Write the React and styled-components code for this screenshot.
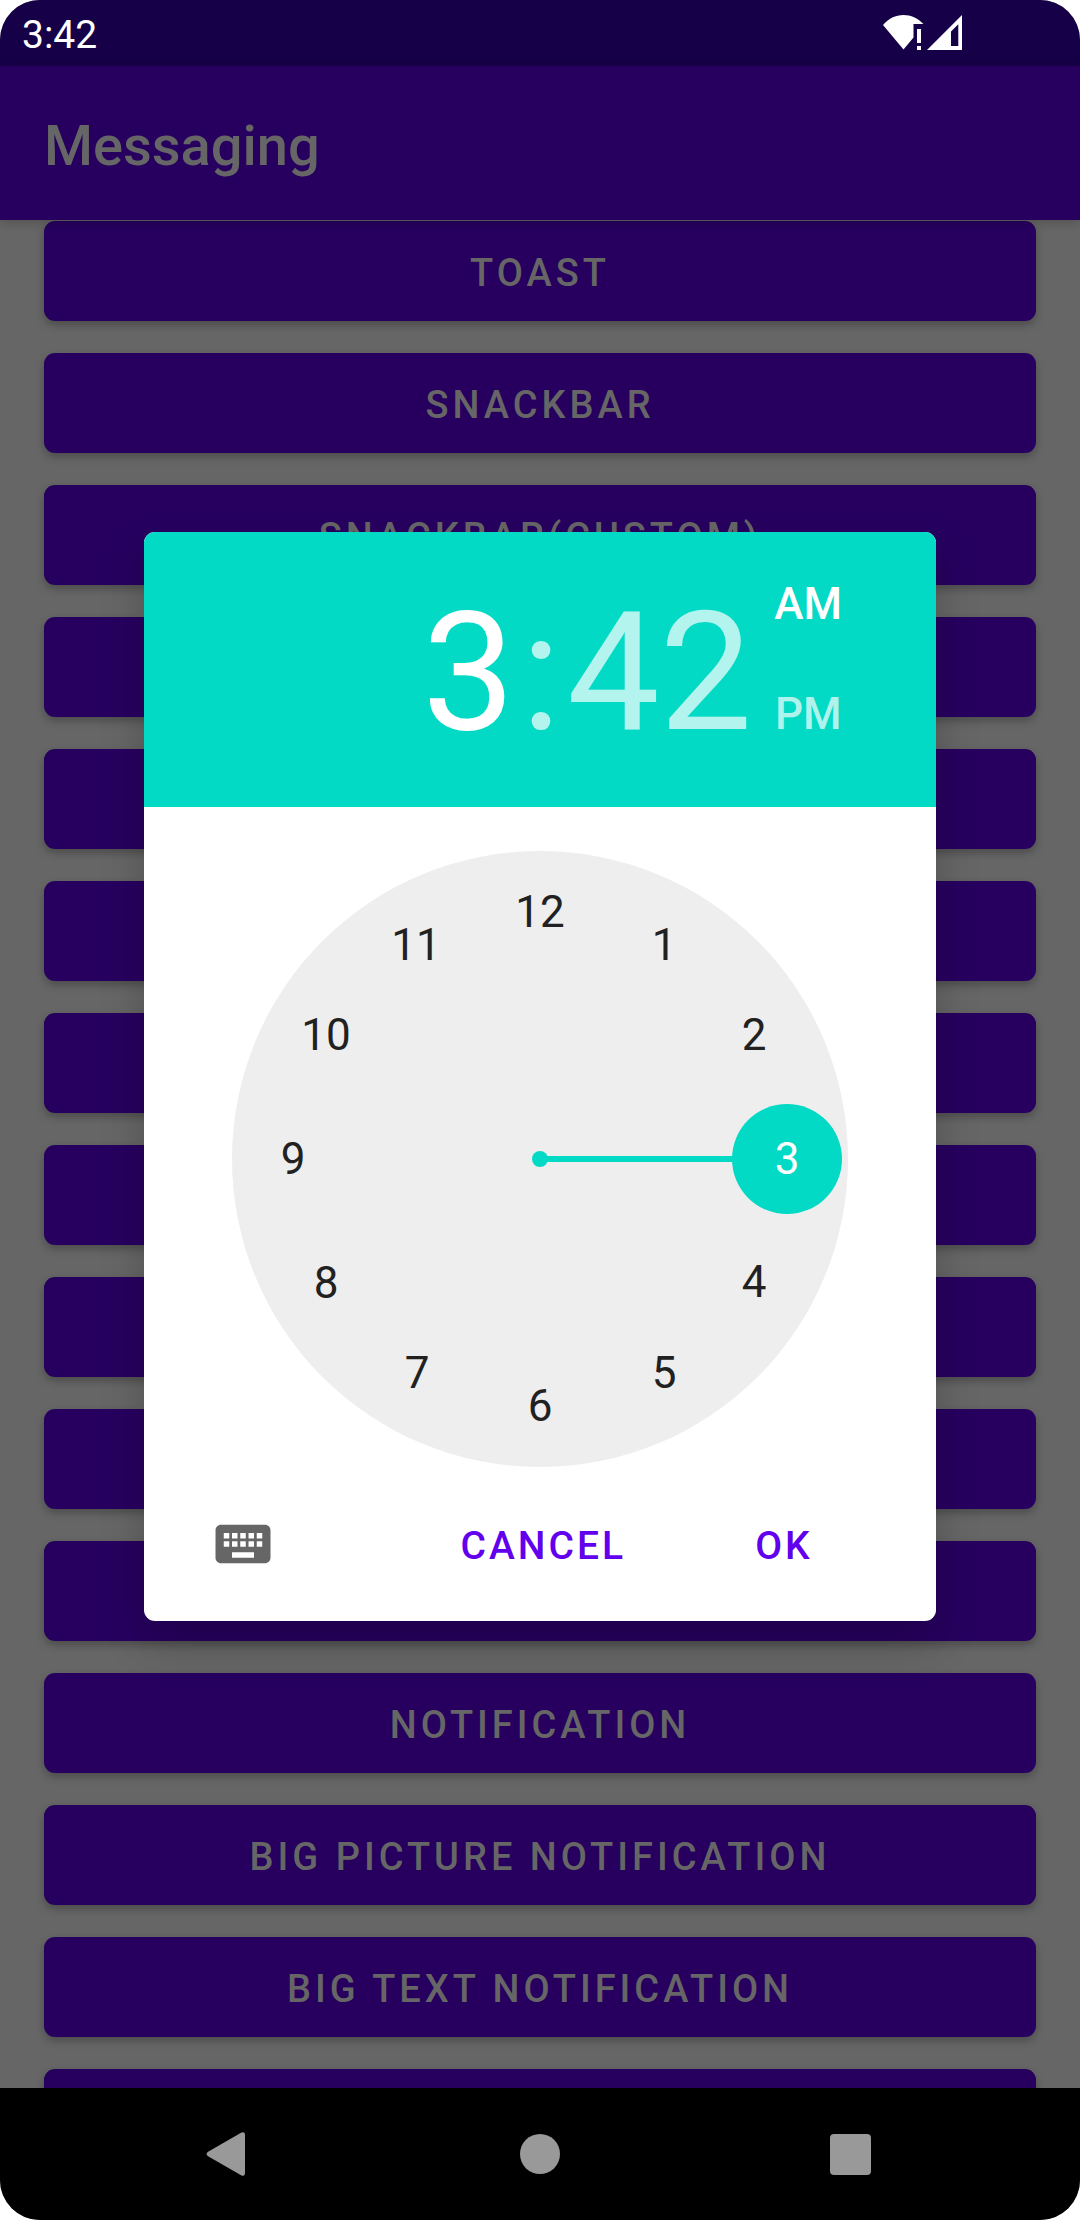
import React, { useState } from "react";
import styled, { createGlobalStyle } from "styled-components";

const color = {
  statusBar: "#160048",
  primaryDimmed: "#27005f",
  surfaceDimmed: "#666666",
  primary: "#6200ee",
  accent: "#03dac5",
  face: "#eeeeee",
  ink: "#212121",
  nav: "#999999",
};

const GlobalStyle = createGlobalStyle`
  *, *::before, *::after { box-sizing: border-box; }
  body { margin: 0; background: #ffffff; }
  button {
    margin: 0;
    padding: 0;
    border: 0;
    background: none;
    font-family: inherit;
    cursor: pointer;
  }
`;

const Screen = styled.div`
  position: relative;
  display: flex;
  flex-direction: column;
  height: 100vh;
  overflow: hidden;
  border-radius: 40px;
  background: ${color.surfaceDimmed};
  font-family: Roboto, "Liberation Sans", sans-serif;
`;

const StatusBar = styled.div`
  display: flex;
  flex: none;
  align-items: center;
  justify-content: space-between;
  height: 66px;
  padding: 0 117px 0 22px;
  background: ${color.statusBar};
  color: #ffffff;
  font-size: 39px;
  line-height: 46px;
`;

const StatusTime = styled.span`
  padding-top: 3px;
`;

const StatusIcons = styled.svg`
  display: block;
  width: 80px;
  height: 36px;
`;

const Toolbar = styled.header`
  position: relative;
  display: flex;
  flex: none;
  align-items: center;
  height: 154px;
  padding: 6px 44px 0;
  background: ${color.primaryDimmed};
  box-shadow: 0 2px 10px rgba(0, 0, 0, 0.22);
`;

const Title = styled.h1`
  margin: 0;
  color: ${color.surfaceDimmed};
  font-size: 56px;
  font-weight: 500;
  line-height: 64px;
`;

const ActionList = styled.main`
  display: flex;
  flex: 1;
  flex-direction: column;
  gap: 32px;
  min-height: 0;
  padding: 1px 44px 0;
  overflow: hidden;
`;

const ActionButton = styled.button`
  flex: none;
  height: 100px;
  padding-top: 4px;
  border-radius: 11px;
  background: ${color.primaryDimmed};
  box-shadow: 0 4px 8px rgba(0, 0, 0, 0.26);
  color: ${color.surfaceDimmed};
  font-size: 38px;
  font-weight: 500;
  line-height: 46px;
  letter-spacing: 4px;
  text-transform: uppercase;
`;

const NavBar = styled.nav`
  display: flex;
  flex: none;
  justify-content: center;
  gap: 90px;
  height: 132px;
  background: #000000;
`;

const NavButton = styled.button`
  display: grid;
  place-items: center;
  width: 220px;
  height: 132px;
`;

const NavIcon = styled.svg`
  display: block;
  width: 66px;
  height: 66px;
  fill: ${color.nav};
`;

const Overlay = styled.div`
  position: absolute;
  inset: 66px 0 133px;
  display: grid;
  place-items: center;
`;

const Dialog = styled.section`
  width: 792px;
  max-width: 100%;
  overflow: hidden;
  border-radius: 11px;
  background: #ffffff;
  box-shadow: 0 22px 44px rgba(0, 0, 0, 0.2);
`;

const TimeHeader = styled.div`
  display: flex;
  align-items: center;
  justify-content: flex-end;
  gap: 22px;
  height: 275px;
  padding-right: 94px;
  background: ${color.accent};
`;

const TimeDisplay = styled.div`
  display: flex;
  align-items: center;
  gap: 6px;
  padding-top: 6px;
  color: rgba(255, 255, 255, 0.7);
  font-size: 165px;
  line-height: 194px;
`;

const TimePart = styled.button`
  color: ${(p) => (p.$active ? "#ffffff" : "rgba(255, 255, 255, 0.7)")};
  font-size: 165px;
  line-height: 194px;
`;

const Meridiem = styled.div`
  display: flex;
  flex-direction: column;
  gap: 58px;
  padding-bottom: 22px;
`;

const MeridiemButton = styled.button`
  color: ${(p) => (p.$active ? "#ffffff" : "rgba(255, 255, 255, 0.7)")};
  font-size: 44px;
  font-weight: 500;
  line-height: 52px;
`;

const DialWrap = styled.div`
  display: grid;
  place-items: center;
  padding-top: 44px;
`;

const Dial = styled.div`
  position: relative;
  width: 616px;
  height: 616px;
`;

const DialFace = styled.svg`
  display: block;
  width: 100%;
  height: 100%;
`;

const Hour = styled.button`
  position: absolute;
  width: 110px;
  height: 110px;
  margin: -55px 0 0 -55px;
  border-radius: 50%;
  color: ${(p) => (p.$active ? "#ffffff" : color.ink)};
  font-size: 44px;
  line-height: 110px;
  text-align: center;
`;

const Footer = styled.div`
  display: flex;
  align-items: center;
  justify-content: flex-end;
  gap: 48px;
  height: 154px;
  padding: 0 64px 0 66px;
`;

const KeyboardButton = styled.button`
  display: block;
  margin-right: auto;
`;

const KeyboardIcon = styled.svg`
  display: block;
  width: 66px;
  height: 66px;
  fill: #666666;
`;

const TextButton = styled.button`
  min-width: 176px;
  height: 100px;
  padding: 4px 22px 0;
  color: ${color.primary};
  font-size: 39px;
  font-weight: 500;
  line-height: 46px;
  letter-spacing: 3px;
`;

const actions = [
  { label: "Toast" },
  { label: "Snackbar" },
  { label: "Snackbar(Custom)" },
  { name: "Dialog" },
  { name: "List dialog" },
  { name: "Single choice dialog" },
  { name: "Multiple choice dialog" },
  { name: "Custom dialog" },
  { name: "Date picker" },
  { name: "Time picker" },
  { name: "Progress dialog" },
  { label: "Notification" },
  { label: "Big Picture Notification" },
  { label: "Big Text Notification" },
  { name: "Inbox notification" },
];

const hours = [12, 1, 2, 3, 4, 5, 6, 7, 8, 9, 10, 11];
const CENTER = 308;
const RING = 247;

const pointFor = (hour) => {
  const angle = (hour * Math.PI) / 6;
  return {
    x: Math.round(CENTER + RING * Math.sin(angle)),
    y: Math.round(CENTER - RING * Math.cos(angle)),
  };
};

function ClockDial({ hour, onChange }) {
  const tip = pointFor(hour);
  return (
    <Dial>
      <DialFace viewBox="0 0 616 616" aria-hidden="true">
        <circle cx={CENTER} cy={CENTER} r="308" fill={color.face} />
        <line x1={CENTER} y1={CENTER} x2={tip.x} y2={tip.y} stroke={color.accent} strokeWidth="6" />
        <circle cx={CENTER} cy={CENTER} r="8" fill={color.accent} />
        <circle cx={tip.x} cy={tip.y} r="55" fill={color.accent} />
      </DialFace>
      {hours.map((value) => {
        const point = pointFor(value);
        return (
          <Hour
            key={value}
            type="button"
            $active={value === hour}
            aria-pressed={value === hour}
            style={{ left: point.x, top: point.y }}
            onClick={() => onChange(value)}
          >
            {value}
          </Hour>
        );
      })}
    </Dial>
  );
}

function TimePicker() {
  const [hour, setHour] = useState(3);
  const [period, setPeriod] = useState("AM");
  return (
    <Dialog role="dialog" aria-label="Select time">
      <TimeHeader>
        <TimeDisplay>
          <TimePart type="button" $active>{hour}</TimePart>
          <span>:</span>
          <TimePart type="button">42</TimePart>
        </TimeDisplay>
        <Meridiem>
          {["AM", "PM"].map((value) => (
            <MeridiemButton
              key={value}
              type="button"
              $active={value === period}
              aria-pressed={value === period}
              onClick={() => setPeriod(value)}
            >
              {value}
            </MeridiemButton>
          ))}
        </Meridiem>
      </TimeHeader>
      <DialWrap>
        <ClockDial hour={hour} onChange={setHour} />
      </DialWrap>
      <Footer>
        <KeyboardButton type="button" aria-label="Keyboard input">
          <KeyboardIcon viewBox="0 0 24 24" aria-hidden="true">
            <path d="M20 5H4c-1.1 0-1.99.9-1.99 2L2 17c0 1.1.9 2 2 2h16c1.1 0 2-.9 2-2V7c0-1.1-.9-2-2-2zm-9 3h2v2h-2V8zm0 3h2v2h-2v-2zM8 8h2v2H8V8zm0 3h2v2H8v-2zm-1 2H5v-2h2v2zm0-3H5V8h2v2zm9 7H8v-2h8v2zm0-4h-2v-2h2v2zm0-3h-2V8h2v2zm3 3h-2v-2h2v2zm0-3h-2V8h2v2z" />
          </KeyboardIcon>
        </KeyboardButton>
        <TextButton type="button">CANCEL</TextButton>
        <TextButton type="button">OK</TextButton>
      </Footer>
    </Dialog>
  );
}

export default function App() {
  return (
    <>
      <GlobalStyle />
      <Screen>
        <StatusBar>
          <StatusTime>3:42</StatusTime>
          <StatusIcons viewBox="0 0 80 36" fill="#ffffff" aria-hidden="true">
            <path d="M0 10C5.500 3.500 12.500 0 20.500 0C28 0 34.500 3 40.500 9H30.500V22.500L20.500 34.500Z" />
            <path d="M34 14h4v14h-4zM34 31h4v4h-4z" />
            <path fillRule="evenodd" d="M44 35L79 0V35ZM68 16.500V31H75.300V9.200Z" />
          </StatusIcons>
        </StatusBar>
        <Toolbar>
          <Title>Messaging</Title>
        </Toolbar>
        <ActionList>
          {actions.map(({ label, name }) => (
            <ActionButton key={label || name} type="button" aria-label={name}>
              {label}
            </ActionButton>
          ))}
        </ActionList>
        <NavBar>
          <NavButton type="button" aria-label="Back">
            <NavIcon viewBox="0 0 66 66" aria-hidden="true">
              <path d="M11.500 30.500L44.500 11.500Q48 10.500 48 14V52Q48 55.500 44.500 54.500L11.500 35.500Q7.500 33 11.500 30.500Z" />
            </NavIcon>
          </NavButton>
          <NavButton type="button" aria-label="Home">
            <NavIcon viewBox="0 0 66 66" aria-hidden="true">
              <circle cx="33" cy="33" r="20" />
            </NavIcon>
          </NavButton>
          <NavButton type="button" aria-label="Recent apps">
            <NavIcon viewBox="0 0 66 66" aria-hidden="true">
              <rect x="13" y="13" width="41" height="41" rx="4" />
            </NavIcon>
          </NavButton>
        </NavBar>
        <Overlay>
          <TimePicker />
        </Overlay>
      </Screen>
    </>
  );
}
